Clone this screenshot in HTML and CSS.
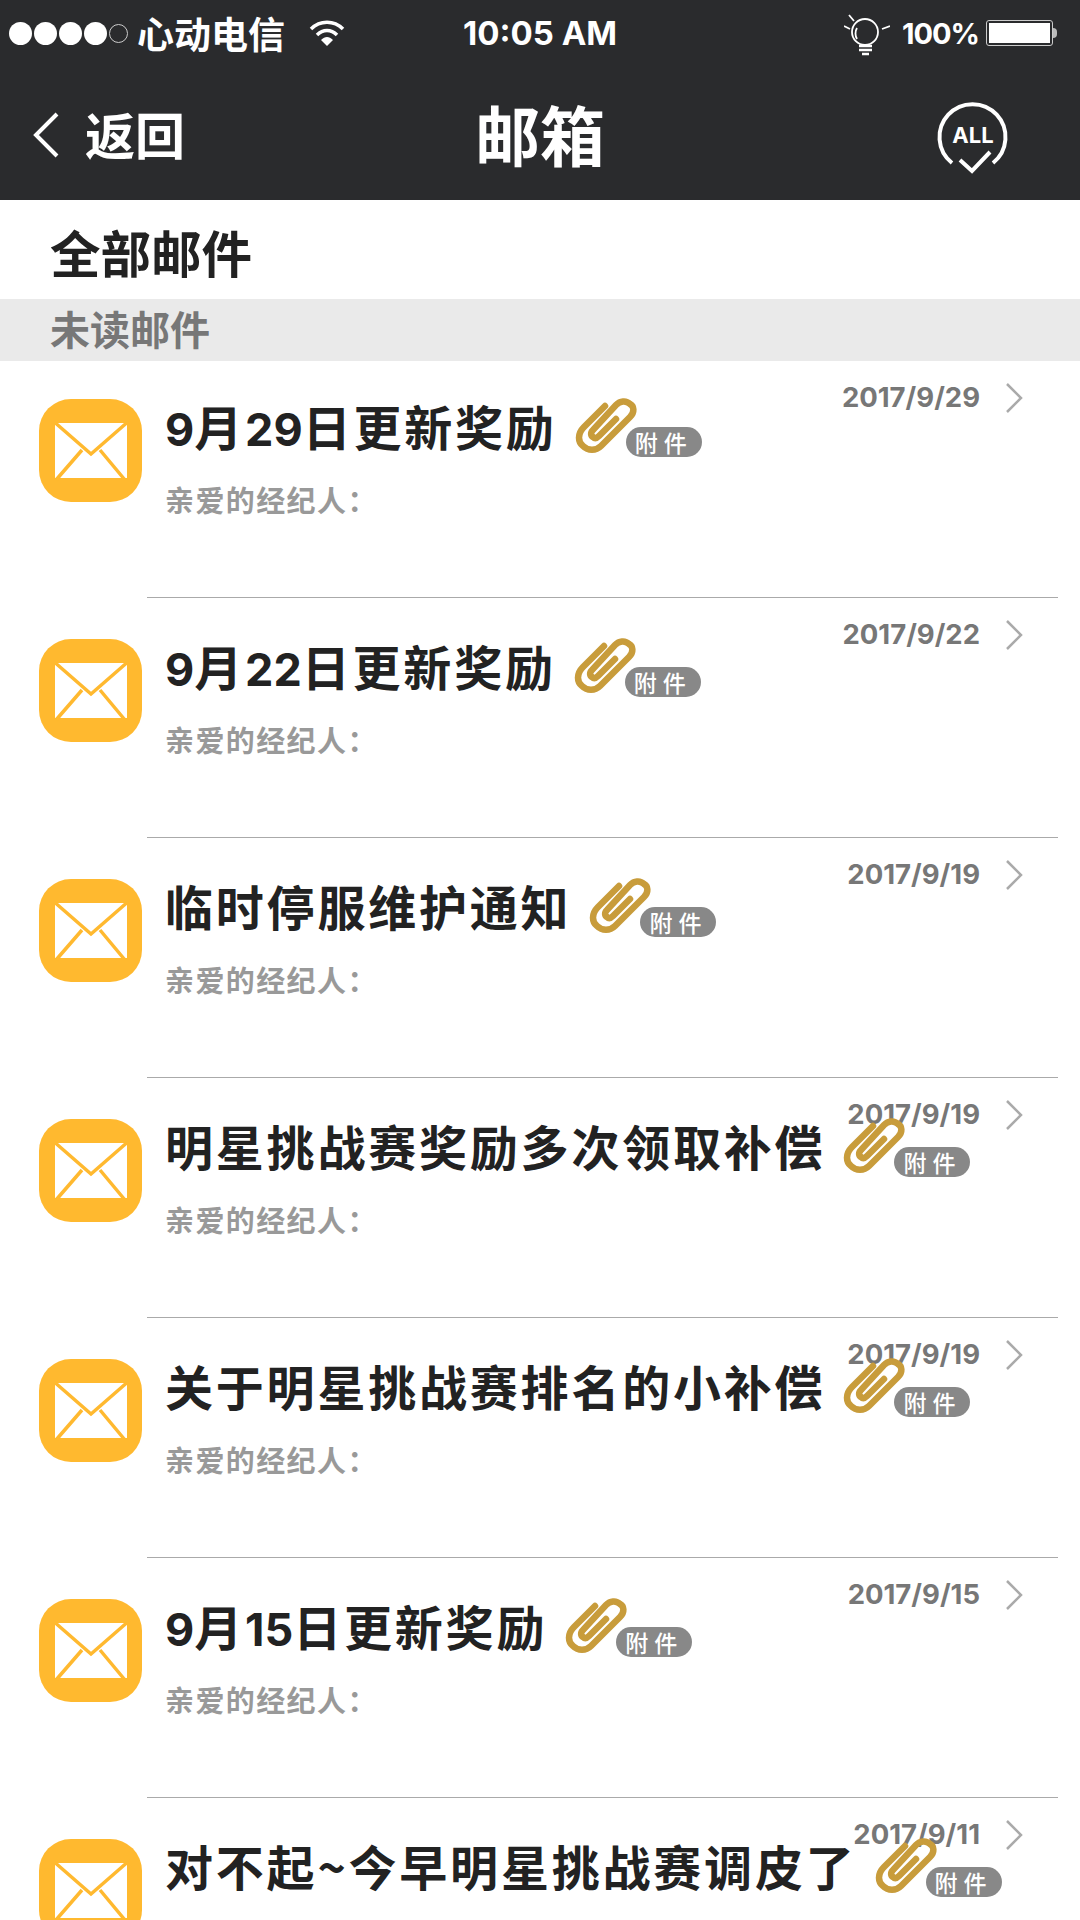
FILE: index.html
```html
<!DOCTYPE html>
<html lang="zh-CN">

<head>
    <meta charset="UTF-8">
    <title>邮箱</title>
    <link rel="stylesheet" href="styles.css">
</head>

<body>
    <svg class="defs" width="0" height="0">
        <symbol id="envelope" viewBox="0 0 103 103">
            <rect width="103" height="103" rx="32" fill="#ffb92f" />
            <rect x="16" y="24" width="72" height="55" fill="#fff" />
            <path d="M13 21 52 55 91 21M17 81 43 51M86 81 61 51" fill="none" stroke="#ffb92f" stroke-width="3.500" />
        </symbol>
        <symbol id="clip" viewBox="0 0 66 66">
            <path d="M33 11 12 32C5 39 6 47 11 51 16 56 24 56 29 51L58 22C63 17 62 11 58 9 54 5 48 6 44 10L21 35C18 38 19 41 21 42 23 44 25 43 27 41L44 24" fill="none" stroke="#c89c3b" stroke-width="6.500" stroke-linecap="round" />
        </symbol>
        <symbol id="chevron" viewBox="0 0 18 32">
            <path d="M2 2 16 16 2 30" fill="none" stroke="#aaa" stroke-width="2.500" />
        </symbol>
    </svg>

    <div class="phone">
        <header class="top">
            <div class="status">
                <div class="status-left">
                    <span class="dot"></span><span class="dot"></span><span class="dot"></span><span class="dot"></span><span class="dot dot-empty"></span>
                    <span class="carrier">心动电信</span>
                    <svg class="wifi" viewBox="0 0 36 28" width="36" height="28">
                        <path d="M2 10C11 1 25 1 34 10M8 16C14 10 22 10 28 16" fill="none" stroke="#fff" stroke-width="3.500" />
                        <path d="M12 21C16 17 20 17 24 21L18 27Z" fill="#fff" />
                    </svg>
                </div>
                <div class="clock">10:05 AM</div>
                <div class="status-right">
                    <svg class="bulb" viewBox="0 0 46 46" width="46" height="46">
                        <g fill="none" stroke="#fff" stroke-width="1.800">
                            <circle cx="21" cy="19" r="13" />
                            <path d="M5 2 10 8M0 13 6 16M46 13 38 16M13 26C11 23 11 18 13 15" />
                            <path d="M15 33 28 33M15 37 28 37M18 41 25 41" stroke-width="2.500" />
                        </g>
                    </svg>
                    <span class="percent">100%</span>
                    <span class="battery"><span class="battery-fill"></span></span>
                    <span class="battery-tip"></span>
                </div>
            </div>
            <nav class="nav">
                <div class="back">
                    <svg viewBox="0 0 28 48" width="28" height="48">
                        <path d="M25 3 4 24 25 45" fill="none" stroke="#fff" stroke-width="4" />
                    </svg>
                    <span>返回</span>
                </div>
                <h1 class="nav-title">邮箱</h1>
                <div class="nav-action">
                    <svg viewBox="0 0 90 90" width="90" height="90">
                        <path d="M22 68A33 33 0 1 1 63 68" fill="none" stroke="#fff" stroke-width="4" />
                        <path d="M30 65 42 76 60 57" fill="none" stroke="#fff" stroke-width="4" />
                        <text x="43" y="48" class="all-text" text-anchor="middle">ALL</text>
                    </svg>
                </div>
            </nav>
        </header>

        <div class="section-title">全部邮件</div>
        <div class="section-bar">未读邮件</div>

        <div class="mail-list">
            <div class="mail-row">
                <svg class="mail-icon"><use href="#envelope" /></svg>
                <div class="mail-body">
                    <div class="mail-head">
                        <span class="mail-title"><span class="num">9</span>月<span class="num">29</span>日更新奖励</span>
                        <svg class="clip"><use href="#clip" /></svg>
                        <span class="badge">附件</span>
                    </div>
                    <div class="mail-sub">亲爱的经纪人：</div>
                </div>
                <span class="mail-date">2017/9/29</span>
                <svg class="mail-arrow"><use href="#chevron" /></svg>
            </div>
            <div class="mail-row">
                <svg class="mail-icon"><use href="#envelope" /></svg>
                <div class="mail-body">
                    <div class="mail-head">
                        <span class="mail-title"><span class="num">9</span>月<span class="num">22</span>日更新奖励</span>
                        <svg class="clip"><use href="#clip" /></svg>
                        <span class="badge">附件</span>
                    </div>
                    <div class="mail-sub">亲爱的经纪人：</div>
                </div>
                <span class="mail-date">2017/9/22</span>
                <svg class="mail-arrow"><use href="#chevron" /></svg>
            </div>
            <div class="mail-row">
                <svg class="mail-icon"><use href="#envelope" /></svg>
                <div class="mail-body">
                    <div class="mail-head">
                        <span class="mail-title">临时停服维护通知</span>
                        <svg class="clip"><use href="#clip" /></svg>
                        <span class="badge">附件</span>
                    </div>
                    <div class="mail-sub">亲爱的经纪人：</div>
                </div>
                <span class="mail-date">2017/9/19</span>
                <svg class="mail-arrow"><use href="#chevron" /></svg>
            </div>
            <div class="mail-row">
                <svg class="mail-icon"><use href="#envelope" /></svg>
                <div class="mail-body">
                    <div class="mail-head">
                        <span class="mail-title">明星挑战赛奖励多次领取补偿</span>
                        <svg class="clip"><use href="#clip" /></svg>
                        <span class="badge">附件</span>
                    </div>
                    <div class="mail-sub">亲爱的经纪人：</div>
                </div>
                <span class="mail-date">2017/9/19</span>
                <svg class="mail-arrow"><use href="#chevron" /></svg>
            </div>
            <div class="mail-row">
                <svg class="mail-icon"><use href="#envelope" /></svg>
                <div class="mail-body">
                    <div class="mail-head">
                        <span class="mail-title">关于明星挑战赛排名的小补偿</span>
                        <svg class="clip"><use href="#clip" /></svg>
                        <span class="badge">附件</span>
                    </div>
                    <div class="mail-sub">亲爱的经纪人：</div>
                </div>
                <span class="mail-date">2017/9/19</span>
                <svg class="mail-arrow"><use href="#chevron" /></svg>
            </div>
            <div class="mail-row">
                <svg class="mail-icon"><use href="#envelope" /></svg>
                <div class="mail-body">
                    <div class="mail-head">
                        <span class="mail-title"><span class="num">9</span>月<span class="num">15</span>日更新奖励</span>
                        <svg class="clip"><use href="#clip" /></svg>
                        <span class="badge">附件</span>
                    </div>
                    <div class="mail-sub">亲爱的经纪人：</div>
                </div>
                <span class="mail-date">2017/9/15</span>
                <svg class="mail-arrow"><use href="#chevron" /></svg>
            </div>
            <div class="mail-row">
                <svg class="mail-icon"><use href="#envelope" /></svg>
                <div class="mail-body">
                    <div class="mail-head">
                        <span class="mail-title">对不起~今早明星挑战赛调皮了</span>
                        <svg class="clip"><use href="#clip" /></svg>
                        <span class="badge">附件</span>
                    </div>
                </div>
                <span class="mail-date">2017/9/11</span>
                <svg class="mail-arrow"><use href="#chevron" /></svg>
            </div>
        </div>
    </div>
</body>

</html>
```

FILE: styles.css
```css
* {
    padding: 0;
    margin: 0;
    box-sizing: border-box;
}

body {
    background: #fff;
    font-family: "Noto Sans CJK SC", "Noto Sans", sans-serif;
}

.defs {
    position: absolute;
}

.phone {
    width: 1080px;
    height: 1920px;
    overflow: hidden;
}

/* header */
.top {
    height: 200px;
    background-color: #2a2b2d;
    color: #fff;
}

.status {
    height: 66px;
    display: grid;
    grid-template-columns: 1fr auto 1fr;
    align-items: center;
}

.status-left {
    display: flex;
    align-items: center;
    padding-left: 9px;
}

.dot {
    width: 23px;
    height: 23px;
    margin-right: 2px;
    border-radius: 50%;
    background-color: #fff;
}

.dot-empty {
    width: 19px;
    height: 19px;
    background: none;
    border: 1px solid #ccc;
}

.carrier {
    margin-left: 7px;
    font-size: 37px;
    font-weight: 700;
    line-height: 1;
}

.wifi {
    margin-left: 24px;
}

.clock {
    font-family: "Inter", sans-serif;
    font-size: 33px;
    font-weight: 700;
}

.status-right {
    display: flex;
    align-items: center;
    justify-content: flex-end;
    padding-right: 23px;
}

.bulb {
    margin: 6px 12px 0 0;
}

.percent {
    font-family: "Inter", sans-serif;
    font-size: 29px;
    font-weight: 700;
    letter-spacing: -1px;
}

.battery {
    width: 67px;
    height: 26px;
    margin-left: 7px;
    padding: 2px;
    border: 1px solid #ccc;
    border-radius: 3px;
}

.battery-fill {
    display: block;
    height: 100%;
    background-color: #fff;
}

.battery-tip {
    width: 4px;
    height: 10px;
    background-color: #bbb;
    border-radius: 0 4px 4px 0;
}

.nav {
    height: 134px;
    display: grid;
    grid-template-columns: 1fr auto 1fr;
    align-items: center;
}

.back {
    display: flex;
    align-items: center;
    gap: 25px;
    padding-left: 32px;
    font-size: 50px;
    font-weight: 700;
}

.back svg {
    margin-top: 4px;
}

.nav-title {
    font-size: 65px;
    font-weight: 700;
    line-height: 1;
}

.nav-action {
    display: flex;
    justify-content: flex-end;
    padding: 14px 60px 0 0;
}

.all-text {
    font-family: "Inter", sans-serif;
    font-size: 22px;
    font-weight: 700;
    fill: #fff;
}

/* sections */
.section-title {
    height: 99px;
    padding-left: 50px;
    font-size: 50.500px;
    font-weight: 700;
    line-height: 103px;
    color: #222;
}

.section-bar {
    height: 62px;
    padding-left: 50px;
    background-color: #eaeaea;
    font-size: 40px;
    font-weight: 700;
    line-height: 59px;
    color: #777;
}

/* mail rows */
.mail-row {
    position: relative;
    height: 240px;
    margin: 0 22px 0 147px;
    padding-top: 41px;
    border-top: 1px solid #aaa;
    display: flex;
}

.mail-row:first-child {
    height: 236px;
    padding-top: 38px;
    border-top: none;
}

.mail-icon {
    width: 103px;
    height: 103px;
    margin-left: -108px;
    flex: none;
}

.mail-body {
    margin-left: 23px;
}

.mail-head {
    display: flex;
    align-items: flex-start;
    height: 80px;
}

.mail-title {
    margin-top: -4px;
    font-size: 48px;
    font-weight: 700;
    letter-spacing: 2.800px;
    line-height: 60px;
    color: #222;
    white-space: nowrap;
}

.num {
    font-family: "Inter", sans-serif;
    font-size: 45px;
    letter-spacing: 0;
}

.clip {
    position: relative;
    z-index: 1;
    width: 66px;
    height: 66px;
    margin: -4px 0 0 15px;
    flex: none;
}

.badge {
    position: relative;
    z-index: 2;
    width: 76px;
    height: 30px;
    margin: 28px 0 0 -12px;
    border-radius: 15px;
    background-color: #888;
    color: #fff;
    font-size: 23px;
    font-weight: 500;
    letter-spacing: 6px;
    line-height: 30px;
    text-align: center;
    flex: none;
}

.mail-sub {
    font-size: 29px;
    font-weight: 700;
    letter-spacing: 1.400px;
    line-height: 40px;
    color: #999;
}

.mail-date {
    position: absolute;
    top: 18px;
    right: 78px;
    font-family: "Inter", sans-serif;
    font-size: 27.500px;
    font-weight: 700;
    line-height: 36px;
    color: #777;
}

.mail-arrow {
    position: absolute;
    top: 21px;
    right: 35px;
    width: 18px;
    height: 32px;
}
```
